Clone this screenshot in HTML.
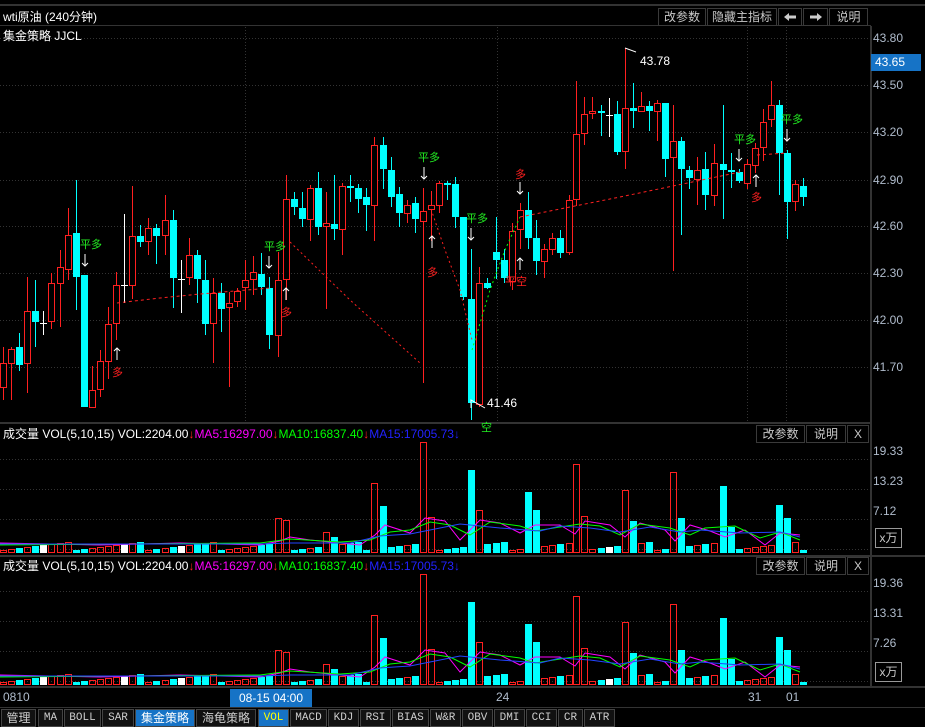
<!DOCTYPE html>
<html><head><meta charset="utf-8">
<style>
*{margin:0;padding:0;box-sizing:border-box}
body{width:925px;height:727px;background:#000;overflow:hidden;font-family:"Liberation Sans","Noto Sans CJK SC",sans-serif;position:relative;color:#ddd}
.ab{position:absolute;white-space:nowrap}
.btn{position:absolute;border:1px solid #3a3a3a;color:#c8c8c8;font-size:12px;text-align:center;line-height:16px;height:18px;background:#000}
.tab{position:absolute;top:709px;height:18px;border:1px solid #444;background:#111;color:#ccc;font-size:11px;text-align:center;line-height:16px;font-family:"Liberation Mono","Noto Sans CJK SC",monospace}
.ax{position:absolute;left:873px;font-size:12px;color:#b0bccc}
</style></head><body>
<svg id="s" width="925" height="727" style="position:absolute;left:0;top:0">
<rect x="0" y="4" width="925" height="2" fill="#333"/>
<rect x="0" y="25" width="871" height="1" fill="#333"/>
<rect x="870" y="26" width="2" height="660" fill="#333"/>
<rect x="0" y="422" width="871" height="2" fill="#333"/>
<rect x="0" y="555" width="925" height="2" fill="#333"/>
<rect x="0" y="686" width="925" height="2" fill="#333"/>
<rect x="0" y="707" width="925" height="1" fill="#333"/>
<g id="grid" stroke="#333" stroke-dasharray="1,2" stroke-width="1"></g>
<g id="c"></g>
</svg>
<div class="ab" style="left:3px;top:8px;font-size:12px;color:#fff">wti原油 (240分钟)</div>
<div class="btn" style="left:658px;top:8px;width:48px">改参数</div>
<div class="btn" style="left:707px;top:8px;width:70px">隐藏主指标</div>
<div class="btn" style="left:778px;top:8px;width:24px"><svg width="14" height="10" style="margin-top:3px"><polygon points="1,5 6,1 6,3.5 13,3.5 13,6.5 6,6.5 6,9" fill="#ccc"/></svg></div>
<div class="btn" style="left:803px;top:8px;width:25px"><svg width="14" height="10" style="margin-top:3px"><polygon points="13,5 8,1 8,3.5 1,3.5 1,6.5 8,6.5 8,9" fill="#ccc"/></svg></div>
<div class="btn" style="left:829px;top:8px;width:39px">说明</div>
<div class="ab" style="left:3px;top:27px;font-size:12px;color:#fff">集金策略 JJCL</div>
<div class="ax" style="top:31px">43.80</div>
<div class="ab" style="left:871px;top:54px;width:50px;height:17px;background:#1673c6;color:#fff;font-size:12px;line-height:17px;padding-left:4px">43.65</div>
<div class="ax" style="top:78px">43.50</div>
<div class="ax" style="top:125px">43.20</div>
<div class="ax" style="top:173px">42.90</div>
<div class="ax" style="top:219px">42.60</div>
<div class="ax" style="top:266px">42.30</div>
<div class="ax" style="top:313px">42.00</div>
<div class="ax" style="top:360px">41.70</div>
<div class="ab" style="left:640px;top:54px;font-size:12px;color:#fff">43.78</div>
<div class="ab" style="left:487px;top:396px;font-size:12px;color:#fff">41.46</div>

<div class="ab" style="left:3px;top:425px;font-size:12px"><span style="color:#fff">成交量 VOL(5,10,15) VOL:2204.00</span><span style="color:#f22">↓</span><span style="color:#f0f">MA5:16297.00</span><span style="color:#f22">↓</span><span style="color:#0f0">MA10:16837.40</span><span style="color:#f22">↓</span><span style="color:#22f">MA15:17005.73↓</span></div>
<div class="btn" style="left:756px;top:425px;width:49px">改参数</div>
<div class="btn" style="left:806px;top:425px;width:40px">说明</div>
<div class="btn" style="left:847px;top:425px;width:22px">X</div>
<div class="ax" style="top:444px">19.33</div>
<div class="ax" style="top:474px">13.23</div>
<div class="ax" style="top:504px">7.12</div>
<div class="btn" style="left:875px;top:528px;width:27px;height:20px;line-height:18px;border-color:#999">x万</div>

<div class="ab" style="left:3px;top:557px;font-size:12px"><span style="color:#fff">成交量 VOL(5,10,15) VOL:2204.00</span><span style="color:#f22">↓</span><span style="color:#f0f">MA5:16297.00</span><span style="color:#f22">↓</span><span style="color:#0f0">MA10:16837.40</span><span style="color:#f22">↓</span><span style="color:#22f">MA15:17005.73↓</span></div>
<div class="btn" style="left:756px;top:557px;width:49px">改参数</div>
<div class="btn" style="left:806px;top:557px;width:40px">说明</div>
<div class="btn" style="left:847px;top:557px;width:22px">X</div>
<div class="ax" style="top:576px">19.36</div>
<div class="ax" style="top:606px">13.31</div>
<div class="ax" style="top:636px">7.26</div>
<div class="btn" style="left:875px;top:662px;width:27px;height:20px;line-height:18px;border-color:#999">x万</div>

<div class="ab" style="left:3px;top:690px;font-size:12px;color:#b0bccc">0810</div>
<div class="ab" style="left:230px;top:689px;width:82px;height:18px;background:#1673c6;color:#fff;font-size:12px;line-height:18px;text-align:center">08-15 04:00</div>
<div class="ab" style="left:496px;top:690px;font-size:12px;color:#b0bccc">24</div>
<div class="ab" style="left:748px;top:690px;font-size:12px;color:#b0bccc">31</div>
<div class="ab" style="left:786px;top:690px;font-size:12px;color:#b0bccc">01</div>

<div class="tab" style="left:1px;width:35px;font-size:12px;font-family:'Liberation Sans','Noto Sans CJK SC',sans-serif">管理</div>
<div class="tab" style="left:38px;width:25px">MA</div>
<div class="tab" style="left:64px;width:37px">BOLL</div>
<div class="tab" style="left:102px;width:32px">SAR</div>
<div class="tab" style="left:135px;width:60px;background:#1673c6;color:#fff;font-size:12px;font-family:'Liberation Sans','Noto Sans CJK SC',sans-serif">集金策略</div>
<div class="tab" style="left:196px;width:60px;font-size:12px;font-family:'Liberation Sans','Noto Sans CJK SC',sans-serif">海龟策略</div>
<div class="tab" style="left:258px;width:31px;background:#1673c6;color:#ff0">VOL</div>
<div class="tab" style="left:290px;width:37px">MACD</div>
<div class="tab" style="left:328px;width:31px">KDJ</div>
<div class="tab" style="left:360px;width:31px">RSI</div>
<div class="tab" style="left:392px;width:37px">BIAS</div>
<div class="tab" style="left:430px;width:31px">W&amp;R</div>
<div class="tab" style="left:462px;width:31px">OBV</div>
<div class="tab" style="left:494px;width:31px">DMI</div>
<div class="tab" style="left:526px;width:31px">CCI</div>
<div class="tab" style="left:558px;width:25px">CR</div>
<div class="tab" style="left:584px;width:31px">ATR</div>

<script>
var ns="http://www.w3.org/2000/svg";
function el(p,t,a){var e=document.createElementNS(ns,t);for(var k in a)e.setAttribute(k,a[k]);p.appendChild(e);return e;}
var g=document.getElementById('c'),gr=document.getElementById('grid');
[38,85,132,180,226,273,320,367].forEach(function(y){el(gr,'line',{x1:0,y1:y+0.5,x2:870,y2:y+0.5});});
[459,489,519,549].forEach(function(y){el(gr,'line',{x1:0,y1:y+.5,x2:870,y2:y+.5});});
[591,621,651,681].forEach(function(y){el(gr,'line',{x1:0,y1:y+.5,x2:870,y2:y+.5});});
[245,497,747,786].forEach(function(x){el(gr,'line',{x1:x+.5,y1:27,x2:x+.5,y2:421});});
var C=[[3,'r',363,387,347,400],[11,'r',349,363,347,400],[19,'c',347,365,333,371],[27,'r',311,363,277,393],[35,'c',311,322,280,347],[43,'w',323,323,311,335],[51,'r',283,321,273,329],[60,'r',267,283,250,327],[68,'r',235,269,208,280],[76,'c',233,277,180,310],[84,'c',275,407,275,407],[92,'r',390,407,366,408],[100,'r',361,389,350,397],[108,'r',324,361,307,379],[116,'r',285,323,272,340],[124,'w',285,285,214,303],[132,'r',236,285,186,299],[140,'c',236,242,225,247],[148,'r',228,241,218,255],[156,'c',228,236,224,264],[165,'r',220,235,195,255],[173,'c',220,278,210,308],[181,'w',279,279,260,313],[189,'r',255,277,238,285],[197,'c',255,279,250,303],[205,'c',280,324,260,335],[213,'r',293,323,278,363],[221,'c',293,309,283,332],[229,'r',303,307,292,387],[237,'r',291,301,288,307],[245,'r',280,287,260,310],[253,'r',272,279,256,295],[261,'c',274,287,253,295],[269,'c',288,335,277,349],[278,'r',280,335,252,357],[286,'r',199,279,175,300],[294,'c',199,207,192,215],[302,'c',208,219,192,227],[310,'r',188,219,185,241],[318,'c',188,227,172,235],[326,'r',223,226,192,309],[334,'c',224,229,175,240],[342,'r',186,229,183,255],[350,'c',186,187,175,202],[358,'c',188,199,184,213],[366,'c',197,205,188,231],[374,'r',145,205,137,241],[383,'c',145,169,137,189],[391,'c',170,197,157,207],[399,'c',194,213,187,227],[407,'r',205,213,200,223],[415,'c',203,219,197,233],[423,'r',211,221,188,383],[431,'r',205,209,191,241],[439,'r',183,205,181,213],[447,'c',183,183,181,200],[455,'c',184,217,177,228],[463,'c',217,297,217,300],[471,'c',299,403,249,420],[479,'r',283,404,267,407],[487,'c',283,288,278,289],[496,'c',252,260,217,279],[504,'c',260,278,249,283],[512,'r',231,281,223,290],[520,'r',210,229,203,249],[528,'c',210,238,192,249],[536,'c',238,261,220,275],[544,'r',249,261,244,278],[552,'r',238,249,233,255],[560,'c',238,253,230,258],[569,'r',200,252,195,255],[576,'r',134,199,81,206],[584,'r',114,133,97,145],[592,'r',111,113,97,119],[601,'c',111,113,105,136],[609,'w',115,115,98,137],[617,'c',114,152,101,155],[625,'r',108,151,48,169],[633,'c',108,111,83,128],[641,'r',106,111,92,112],[649,'c',106,111,101,131],[657,'r',103,111,100,141],[665,'c',103,159,103,177],[673,'r',141,157,105,271],[681,'c',141,169,137,235],[689,'c',170,178,166,189],[697,'r',170,179,157,205],[705,'c',169,195,152,210],[714,'r',163,195,144,206],[723,'c',164,170,105,219],[731,'c',170,172,153,188],[739,'c',172,181,169,183],[747,'r',164,183,159,189],[755,'r',148,165,143,173],[763,'r',122,147,109,161],[771,'r',105,119,81,127],[779,'c',105,153,100,195],[787,'c',153,202,150,239],[795,'r',184,201,180,211],[803,'c',186,197,178,206]];
var col={r:'#ff2020',c:'#00ffff',w:'#ffffff'};
C.forEach(function(d){var x=d[0],c=col[d[1]];
 el(g,'line',{x1:x+.5,y1:d[4],x2:x+.5,y2:d[5],stroke:c,'stroke-width':1});
 if(d[1]=='w'){el(g,'line',{x1:x-3,y1:d[2]+.5,x2:x+4,y2:d[2]+.5,stroke:c});}
 else if(d[1]=='r'){el(g,'rect',{x:x-2.5,y:d[2]+.5,width:6,height:Math.max(1,d[3]-d[2]),fill:'#000',stroke:c,'stroke-width':1});}
 else el(g,'rect',{x:x-3,y:d[2],width:7,height:Math.max(2,d[3]-d[2]),fill:c});
});
function pl(pts,c,da){el(g,'polyline',{points:pts,fill:'none',stroke:c,'stroke-width':1,'stroke-dasharray':da});}
pl('117,303 160,298 200,294 270,288','#ff2020','3,3');
pl('290,242 350,300 420,363','#ff2020','2,3');
pl('431,209 445,250 460,290 472,340','#ff2020','2,3');
pl('472,350 490,290 505,250 520,217','#00ff00','2,3');
pl('520,217 570,207 620,197 673,186 740,172','#ff2020','3,3');
pl('757,155 787,153','#ff2020','3,3');
el(g,'polyline',{points:'625,48 636,52',stroke:'#fff',fill:'none'});
el(g,'polyline',{points:'471,408 471,400 485,408',stroke:'#fff',fill:'none'});
function tx(x,y,s,c){var t=el(g,'text',{x:x,y:y,fill:c,'font-size':11,'font-family':'Liberation Sans,Noto Sans CJK SC,sans-serif'});t.textContent=s;}
function ar(x,y,down){var a=down?'M'+x+' '+y+' v12 M'+(x-3)+' '+(y+9)+' l3 3 l3 -3':'M'+x+' '+(y+12)+' v-12 M'+(x-3)+' '+(y+3)+' l3 -3 l3 3';el(g,'path',{d:a,stroke:'#fff',fill:'none'});}
[[80,248,85],[264,250,269],[418,161,424],[466,222,471],[734,143,739],[781,123,787]].forEach(function(s){tx(s[0],s[1],'平多','#22ee22');ar(s[2],s[1]+6,true);});
[[117,348,376],[286,288,316],[432,236,276],[756,175,201]].forEach(function(s){ar(s[0],s[1],false);tx(s[0]-5,s[2],'多','#ff2020');});
ar(520,182,true);tx(515,178,'多','#ff2020');
ar(520,258,false);
tx(505,285,'平空','#ff2020');tx(481,431,'空','#22ee22');
var big={372:[483,'r'],380:[506,'c'],278:[518,'r'],286:[520,'r'],326:[532,'r'],334:[537,'c'],423:[442,'r'],431:[517,'r'],471:[470,'c'],479:[510,'r'],528:[492,'c'],536:[510,'c'],576:[464,'r'],584:[516,'r'],625:[490,'r'],633:[521,'c'],673:[472,'r'],681:[518,'c'],723:[486,'c'],731:[527,'c'],779:[505,'c'],787:[518,'c']};
function vol(base,sc){
 C.forEach(function(d,i){var x=d[0],h=3+((i*37)%9),t=d[1];
  var b=null;for(var k in big){if(Math.abs(k-x)<=3){b=big[k];}}
  if(b){h=(553-b[0]);t=b[1];}
  h=h*sc;var c=col[t];
  if(t=='r')el(g,'rect',{x:x-2.5,y:base-h+.5,width:6,height:h-1,fill:'none',stroke:c});
  else el(g,'rect',{x:x-3,y:base-h,width:7,height:h,fill:c});
 });
 function ln(pts,c){var p=pts.map(function(q){return q[0]+','+(base-(553-q[1])*sc);}).join(' ');el(g,'polyline',{points:p,fill:'none',stroke:c,'stroke-width':1});}
 ln([[0,543],[100,545],[180,543],[260,545],[280,541],[290,537],[310,540],[360,545],[375,535],[385,525],[410,533],[425,518],[445,521],[460,540],[480,520],[500,523],[520,533],[535,525],[560,525],[575,534],[585,521],[610,525],[625,537],[640,523],[665,530],[675,541],[690,525],[710,531],[725,537],[745,530],[765,545],[780,533],[800,535]],'#ff00ff');
 ln([[0,545],[120,544],[260,543],[290,539],[340,542],[370,540],[390,532],[410,530],[430,522],[450,525],[470,535],[490,522],[520,526],[535,531],[560,527],[580,524],[600,526],[620,535],[640,524],[670,528],[690,535],[705,528],[735,526],[760,538],[780,532],[800,540]],'#00ff00');
 ln([[0,544],[150,544],[260,544],[290,543],[350,543],[380,536],[410,534],[430,530],[460,524],[500,528],[540,531],[560,526],[590,528],[620,532],[650,527],[680,532],[700,530],[740,533],[780,532],[800,537]],'#2244ff');
}
vol(553,1);vol(685,1);
</script>
</body></html>
